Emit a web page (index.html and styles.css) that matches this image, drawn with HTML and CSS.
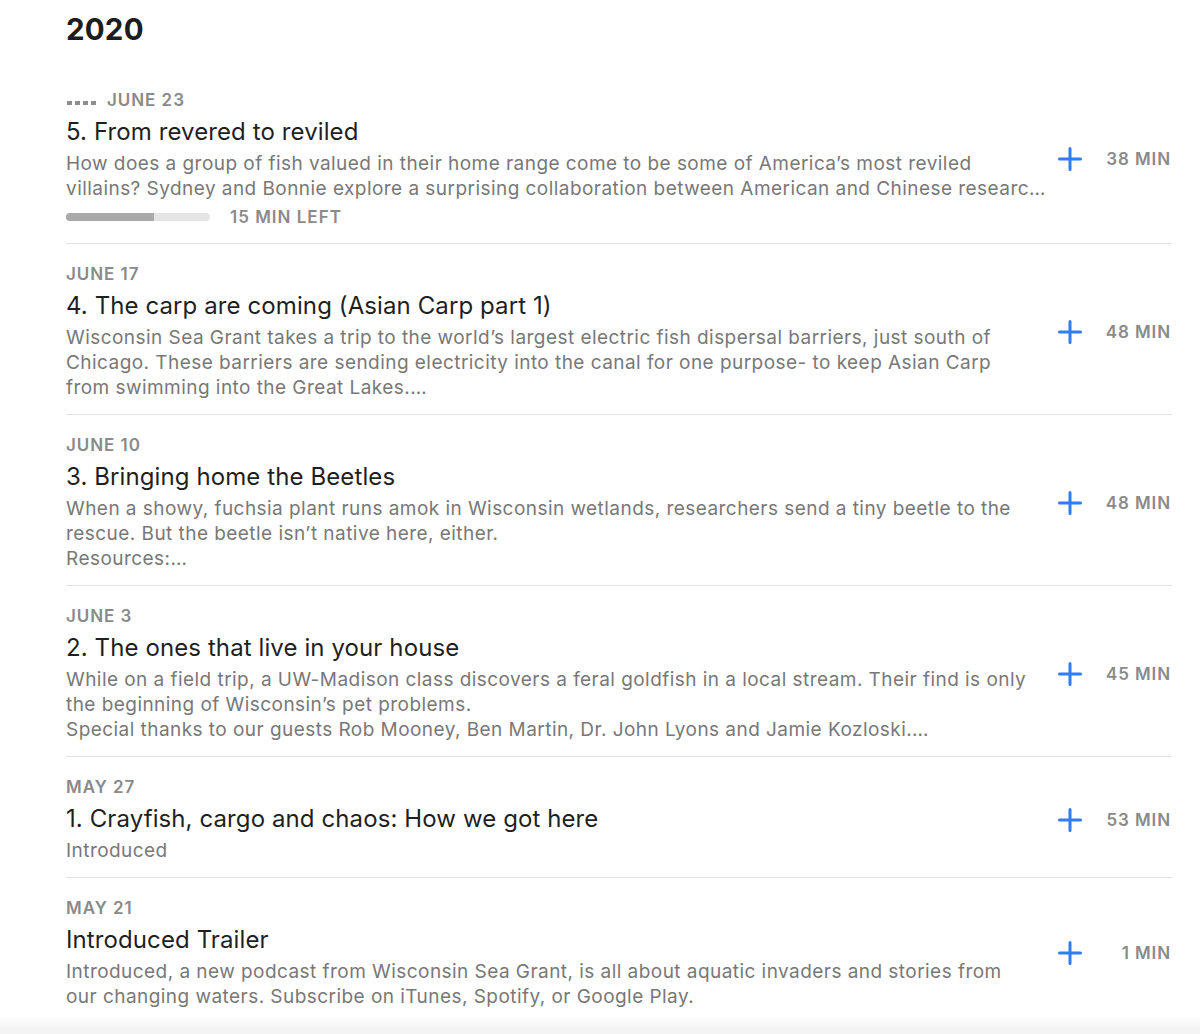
FILE: index.html
```html
<!DOCTYPE html>
<html lang="en">
<head>
<meta charset="utf-8">
<title>Introduced – 2020</title>
<link rel="stylesheet" href="styles.css">
</head>
<body>
<main class="page">
  <h1 class="year">2020</h1>
  <ul class="episodes">
    <li class="episode">
      <div class="info">
        <div class="date"><span class="dots"><i></i><i></i><i></i><i></i></span>JUNE 23</div>
        <div class="title">5. From revered to reviled</div>
        <p class="desc">How does a group of fish valued in their home range come to be some of America’s most reviled<br>villains? Sydney and Bonnie explore a surprising collaboration between American and Chinese researc…</p>
        <div class="progress-row">
          <div class="bar"><div class="fill" style="width: 61%"></div></div>
          <span class="left">15 MIN LEFT</span>
        </div>
      </div>
      <div class="actions">
        <svg class="plus" viewBox="0 0 24 24" aria-hidden="true"><path d="M12 1.5v21M1.5 12h21"/></svg>
        <span class="duration">38 MIN</span>
      </div>
    </li>
    <li class="episode">
      <div class="info">
        <div class="date">JUNE 17</div>
        <div class="title">4. The carp are coming (Asian Carp part 1)</div>
        <p class="desc">Wisconsin Sea Grant takes a trip to the world’s largest electric fish dispersal barriers, just south of<br>Chicago. These barriers are sending electricity into the canal for one purpose- to keep Asian Carp<br>from swimming into the Great Lakes.…</p>
      </div>
      <div class="actions">
        <svg class="plus" viewBox="0 0 24 24" aria-hidden="true"><path d="M12 1.5v21M1.5 12h21"/></svg>
        <span class="duration">48 MIN</span>
      </div>
    </li>
    <li class="episode">
      <div class="info">
        <div class="date">JUNE 10</div>
        <div class="title">3. Bringing home the Beetles</div>
        <p class="desc">When a showy, fuchsia plant runs amok in Wisconsin wetlands, researchers send a tiny beetle to the<br>rescue. But the beetle isn’t native here, either.<br>Resources:…</p>
      </div>
      <div class="actions">
        <svg class="plus" viewBox="0 0 24 24" aria-hidden="true"><path d="M12 1.5v21M1.5 12h21"/></svg>
        <span class="duration">48 MIN</span>
      </div>
    </li>
    <li class="episode">
      <div class="info">
        <div class="date">JUNE 3</div>
        <div class="title">2. The ones that live in your house</div>
        <p class="desc">While on a field trip, a UW-Madison class discovers a feral goldfish in a local stream. Their find is only<br>the beginning of Wisconsin’s pet problems.<br>Special thanks to our guests Rob Mooney, Ben Martin, Dr. John Lyons and Jamie Kozloski.…</p>
      </div>
      <div class="actions">
        <svg class="plus" viewBox="0 0 24 24" aria-hidden="true"><path d="M12 1.5v21M1.5 12h21"/></svg>
        <span class="duration">45 MIN</span>
      </div>
    </li>
    <li class="episode">
      <div class="info">
        <div class="date">MAY 27</div>
        <div class="title">1. Crayfish, cargo and chaos: How we got here</div>
        <p class="desc">Introduced</p>
      </div>
      <div class="actions">
        <svg class="plus" viewBox="0 0 24 24" aria-hidden="true"><path d="M12 1.5v21M1.5 12h21"/></svg>
        <span class="duration">53 MIN</span>
      </div>
    </li>
    <li class="episode">
      <div class="info">
        <div class="date">MAY 21</div>
        <div class="title">Introduced Trailer</div>
        <p class="desc">Introduced, a new podcast from Wisconsin Sea Grant, is all about aquatic invaders and stories from<br>our changing waters. Subscribe on iTunes, Spotify, or Google Play.</p>
      </div>
      <div class="actions">
        <svg class="plus" viewBox="0 0 24 24" aria-hidden="true"><path d="M12 1.5v21M1.5 12h21"/></svg>
        <span class="duration">1 MIN</span>
      </div>
    </li>
  </ul>
</main>
<div class="bottom-fade"></div>
</body>
</html>
```

FILE: styles.css
```css
* { box-sizing: border-box; }

html, body {
  margin: 0;
  padding: 0;
  background: #ffffff;
}

body {
  font-family: "Inter", "Liberation Sans", sans-serif;
  color: #1f1f1f;
}

.page {
  padding: 11px 28px 40px 66px;
}

.year {
  margin: 0;
  font-size: 29.5px;
  line-height: 36px;
  font-weight: 700;
  color: #1d1d1f;
  letter-spacing: 0.2px;
}

.episodes {
  list-style: none;
  margin: 33px 0 0;
  padding: 0;
}

.episode {
  display: flex;
  align-items: center;
  padding: 19px 0 14px;
  border-bottom: 1px solid #e2e2e2;
}

.episode:first-child {
  padding-top: 9px;
  padding-bottom: 15px;
}

.episode:last-child {
  border-bottom: none;
}

.info {
  flex: 1;
  min-width: 0;
}

.date {
  display: flex;
  align-items: center;
  font-size: 17px;
  line-height: 22px;
  font-weight: 600;
  color: #8a8a8a;
  letter-spacing: 0.95px;
}

.dots {
  display: inline-flex;
  gap: 3px;
  margin-left: 1px;
  margin-right: 11px;
  margin-top: 5px;
}

.dots i {
  display: block;
  width: 5px;
  height: 4px;
  background: #8e8e8e;
}

.title {
  margin-top: 5px;
  font-size: 24px;
  line-height: 32px;
  font-weight: 400;
  color: #1f1f1f;
  letter-spacing: 0.1px;
}

.desc {
  margin: 3px 0 0;
  font-size: 19px;
  line-height: 25px;
  color: #787878;
  letter-spacing: 0.45px;
  white-space: nowrap;
}

.progress-row {
  display: flex;
  align-items: center;
  margin-top: 5px;
  height: 22px;
}

.bar {
  width: 144px;
  height: 8px;
  border-radius: 4px;
  background: #e6e6e6;
  overflow: hidden;
}

.fill {
  height: 100%;
  background: #a9a9a9;
}

.left {
  margin-left: 20px;
  font-size: 17px;
  font-weight: 600;
  color: #8a8a8a;
  letter-spacing: 1px;
}

.actions {
  display: flex;
  align-items: center;
  margin-left: 26px;
}

.plus {
  width: 24px;
  height: 24px;
  fill: none;
  stroke: #2f7cf6;
  stroke-width: 3;
  stroke-linecap: round;
}

.duration {
  width: 90px;
  text-align: right;
  font-size: 17px;
  font-weight: 600;
  color: #8a8a8a;
  letter-spacing: 0.9px;
  padding-right: 1px;
}

.bottom-fade {
  position: fixed;
  left: 0;
  right: 0;
  bottom: 0;
  height: 18px;
  background: linear-gradient(to bottom, rgba(245,245,245,0), #f4f4f4 70%);
  pointer-events: none;
}
```
